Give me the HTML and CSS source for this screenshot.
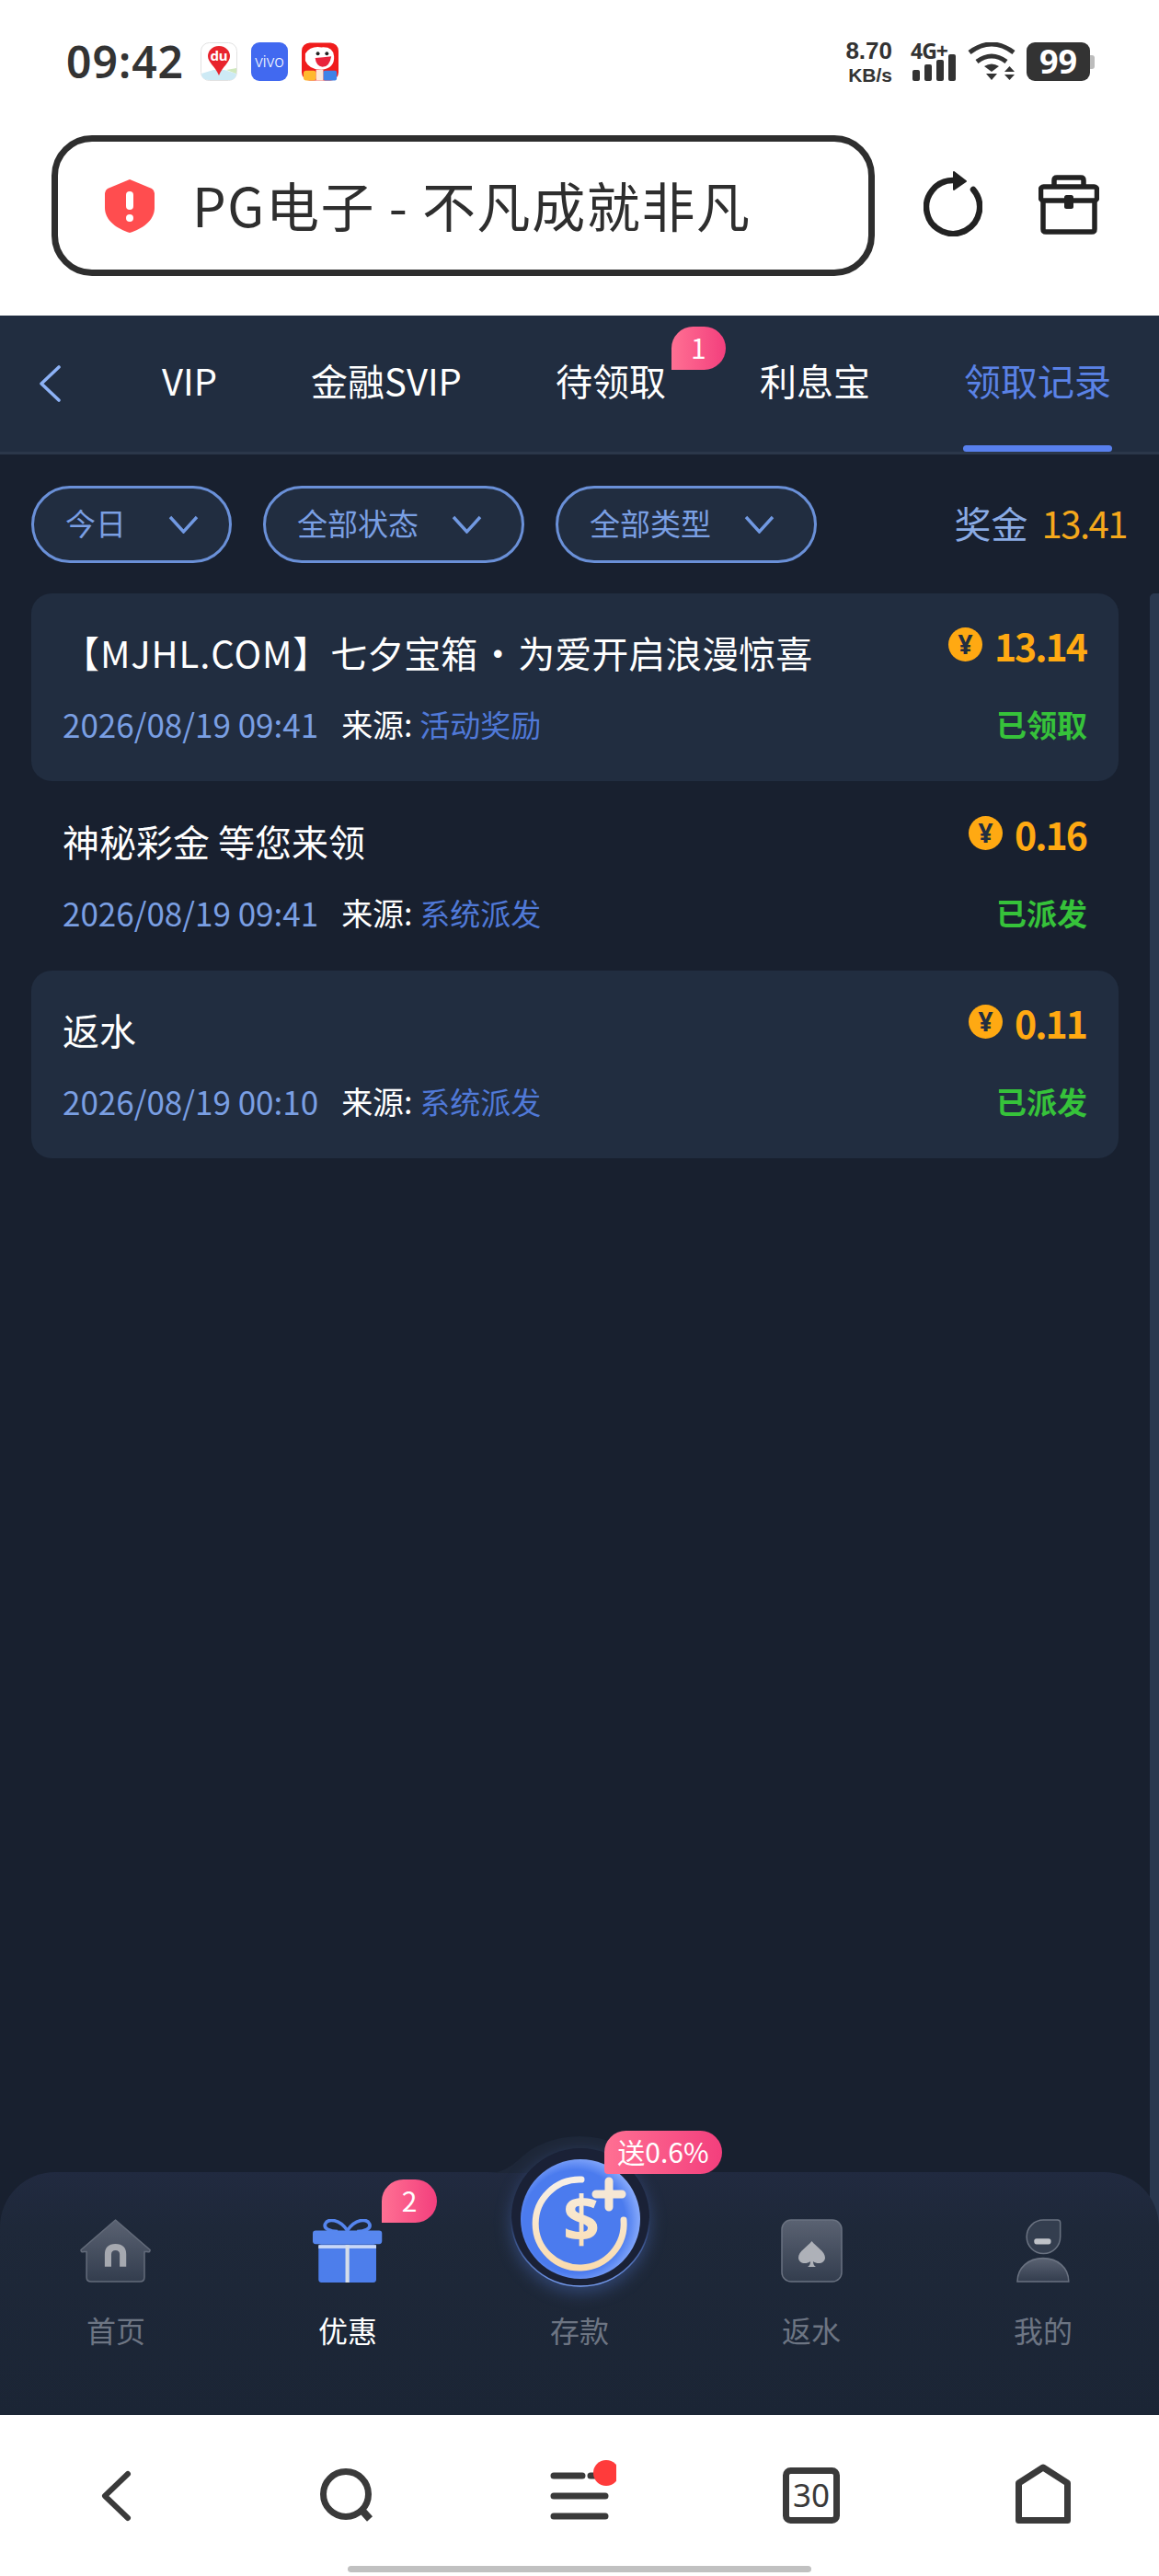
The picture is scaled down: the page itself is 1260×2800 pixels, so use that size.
FILE: index.html
```html
<!DOCTYPE html>
<html lang="zh-CN">
<head>
    <meta charset="UTF-8">
    <meta name="viewport" content="width=device-width, initial-scale=1.0">
    <title>领取记录</title>
    <link rel="stylesheet" href="styles.css">
</head>
<body>
    <div class="phone">
        <!-- 状态栏 -->
        <div class="statusbar">
            <span class="clock">09:42</span>
            <div class="app-icons">
                <svg class="app-icon" viewBox="0 0 40 42">
                    <rect x="0.5" y="0.5" width="39" height="41" rx="9" fill="#fff" stroke="#e2e2e2"/>
                    <path d="M1 34 L14 30 L26 30 L39 34 V33 Q39 41 31 41 H9 Q1 41 1 33 Z" fill="#cdeaf5"/>
                    <path d="M28 30 L39 34 V28 Z" fill="#cfe8bd"/>
                    <path d="M20 4 C28 4 32 10 32 15 C32 22 24 26 20 36 C16 26 8 22 8 15 C8 10 12 4 20 4 Z" fill="#e8242c"/>
                    <text x="20" y="20" class="du-text" text-anchor="middle">du</text>
                </svg>
                <svg class="app-icon" viewBox="0 0 40 42">
                    <rect width="40" height="42" rx="9" fill="#4169f0"/>
                    <text x="20" y="27" class="vivo-text" text-anchor="middle">vivo</text>
                </svg>
                <svg class="app-icon" viewBox="0 0 41 42">
                    <rect width="41" height="42" rx="9" fill="#f01c1c"/>
                    <path d="M4 12 Q10 3 22 5 Q35 4 36 15 Q37 28 22 30 Q8 30 4 20 Z" fill="#fff"/>
                    <circle cx="18" cy="12" r="2" fill="#222"/>
                    <circle cx="28" cy="12" r="2" fill="#222"/>
                    <path d="M15 17 Q24 16 33 15 Q31 27 23 27 Q16 26 15 17 Z" fill="#e8243c"/>
                    <rect x="2" y="31" width="14" height="11" rx="3" fill="#ffb92e"/>
                    <rect x="24" y="31" width="15" height="11" rx="2" fill="#3f83e8"/>
                    <path d="M16 30 H24 V42 H16 Z" fill="#fde7d8"/>
                </svg>
            </div>
            <div class="status-right">
                <div class="net-speed">
                    <span class="speed-num">8.70</span>
                    <span class="speed-unit">KB/s</span>
                </div>
                <div class="signal">
                    <span class="signal-label">4G+</span>
                    <div class="signal-bars">
                        <i class="bar bar-1"></i>
                        <i class="bar bar-2"></i>
                        <i class="bar bar-3"></i>
                        <i class="bar bar-4"></i>
                    </div>
                </div>
                <svg class="wifi" viewBox="0 0 53 42">
                    <path d="M2 11 Q26 -7 50 11" fill="none" stroke="#333" stroke-width="5"/>
                    <path d="M10 21 Q26 9 42 21" fill="none" stroke="#333" stroke-width="5"/>
                    <path d="M18 26 Q26 21 34 26 L26 32 Z" fill="#333"/>
                    <path d="M20 34 H32 L26 41 Z" fill="#333"/>
                    <path d="M45.5 26 L51 32 H40 Z" fill="#333"/>
                    <path d="M40 35 H51 L45.5 41 Z" fill="#333"/>
                </svg>
                <div class="battery">
                    <span class="battery-level">99</span>
                    <i class="battery-nub"></i>
                </div>
            </div>
        </div>

        <!-- 地址栏 -->
        <div class="urlrow">
            <div class="urlbar">
                <svg class="shield" viewBox="0 0 54 58">
                    <path d="M27 0 L51 10 Q54 12 54 15 V31 C54 45 40 54 27 58 C14 54 0 45 0 31 V15 Q0 12 3 10 Z" fill="#ff4d4f"/>
                    <rect x="23" y="13" width="8" height="20" rx="4" fill="#fff"/>
                    <circle cx="27" cy="42" r="4" fill="#fff"/>
                </svg>
                <span class="url-title">PG电子 - 不凡成就非凡</span>
            </div>
            <svg class="reload" viewBox="0 0 64 71">
                <path d="M54 20 A29 29 0 1 1 32 10" fill="none" stroke="#222" stroke-width="6.5" stroke-linecap="round"/>
                <path d="M33 1 L46 11 L33 20 Z" fill="#222" stroke="#222" stroke-width="2" stroke-linejoin="round"/>
            </svg>
            <svg class="toolbox" viewBox="0 0 66 65">
                <path d="M17 12 V6 Q17 3 20 3 H46 Q49 3 49 6 V12" fill="none" stroke="#222" stroke-width="5.5"/>
                <rect x="2.5" y="13" width="61" height="15" rx="3" fill="none" stroke="#222" stroke-width="5.5"/>
                <path d="M5 28 V59 Q5 62 8 62 H58 Q61 62 61 59 V28" fill="none" stroke="#222" stroke-width="5.5"/>
                <rect x="28" y="22" width="10" height="15" rx="2.5" fill="#222"/>
            </svg>
        </div>

        <!-- 页面内容 -->
        <div class="page">
            <div class="topnav">
                <svg class="nav-back" viewBox="0 0 24 40">
                    <path d="M22 2 L3 20 L22 38" fill="none" stroke="#8db2f6" stroke-width="3.6" stroke-linecap="round" stroke-linejoin="round"/>
                </svg>
                <div class="nav-tabs">
                    <div class="nav-tab">VIP</div>
                    <div class="nav-tab">金融SVIP</div>
                    <div class="nav-tab">待领取<span class="badge nav-badge">1</span></div>
                    <div class="nav-tab">利息宝</div>
                    <div class="nav-tab active">领取记录</div>
                </div>
            </div>

            <div class="filters">
                <div class="pill pill-today">
                    <span class="pill-text">今日</span>
                    <svg class="chevron" viewBox="0 0 33 20"><path d="M2 2 L16.5 18 L31 2" fill="none" stroke="#7199e2" stroke-width="3.4"/></svg>
                </div>
                <div class="pill">
                    <span class="pill-text">全部状态</span>
                    <svg class="chevron" viewBox="0 0 33 20"><path d="M2 2 L16.5 18 L31 2" fill="none" stroke="#7199e2" stroke-width="3.4"/></svg>
                </div>
                <div class="pill">
                    <span class="pill-text">全部类型</span>
                    <svg class="chevron" viewBox="0 0 33 20"><path d="M2 2 L16.5 18 L31 2" fill="none" stroke="#7199e2" stroke-width="3.4"/></svg>
                </div>
                <div class="bonus">
                    <span class="bonus-label">奖金</span>
                    <span class="bonus-value">13.41</span>
                </div>
            </div>

            <div class="records">
                <div class="record striped">
                    <div class="record-top">
                        <span class="record-title"><span class="title-latin">【MJHL.COM】</span>七夕宝箱<span class="title-dot">·</span>为爱开启浪漫惊喜</span>
                        <span class="record-amount"><i class="coin">¥</i>13.14</span>
                    </div>
                    <div class="record-bottom">
                        <span class="record-date">2026/08/19 09:41</span>
                        <span class="record-source">来源: <em>活动奖励</em></span>
                        <span class="record-status">已领取</span>
                    </div>
                </div>
                <div class="record">
                    <div class="record-top">
                        <span class="record-title">神秘彩金 等您来领</span>
                        <span class="record-amount"><i class="coin">¥</i>0.16</span>
                    </div>
                    <div class="record-bottom">
                        <span class="record-date">2026/08/19 09:41</span>
                        <span class="record-source">来源: <em>系统派发</em></span>
                        <span class="record-status">已派发</span>
                    </div>
                </div>
                <div class="record striped">
                    <div class="record-top">
                        <span class="record-title">返水</span>
                        <span class="record-amount"><i class="coin">¥</i>0.11</span>
                    </div>
                    <div class="record-bottom">
                        <span class="record-date">2026/08/19 00:10</span>
                        <span class="record-source">来源: <em>系统派发</em></span>
                        <span class="record-status">已派发</span>
                    </div>
                </div>
            </div>

            <div class="scroll-thumb"></div>

            <!-- 底部导航 -->
            <div class="tabbar">
                <svg class="tabbar-hump" viewBox="0 0 200 40">
                    <path d="M0 40 C25 40 32 24 50 13 C68 3 85 0 100 0 C115 0 132 3 150 13 C168 24 175 40 200 40 Z" fill="#1e2738"/>
                </svg>
                <div class="tab">
                    <svg class="tab-icon" viewBox="0 0 76 68">
                        <defs>
                            <linearGradient id="grayFill" x1="0" y1="0" x2="0" y2="1">
                                <stop offset="0" stop-color="#5a6272"/>
                                <stop offset="1" stop-color="#333d4e"/>
                            </linearGradient>
                        </defs>
                        <path d="M38 1 L75 33 Q75 36 72 35 H69 V62 Q69 67 64 67 H12 Q7 67 7 62 V35 H4 Q1 36 1 33 Z" fill="url(#grayFill)" stroke="#636b7a" stroke-width="1.5" stroke-linejoin="round"/>
                        <path d="M30 51 V38 Q30 30 38 30 Q46 30 46 38 V51" fill="none" stroke="#a6a9b0" stroke-width="7"/>
                    </svg>
                    <span class="tab-label">首页</span>
                </div>
                <div class="tab current">
                    <svg class="tab-icon" viewBox="0 0 72 66">
                        <path d="M36 12 C28 0 16 -1 13 5 C11 10 18 13 26 13 M36 12 C44 0 56 -1 59 5 C61 10 54 13 46 13" fill="none" stroke="#5585ee" stroke-width="3.5"/>
                        <rect x="0" y="12" width="72" height="14" rx="3" fill="#5787ef"/>
                        <rect x="6" y="26" width="60" height="40" rx="3" fill="#4d7eeb"/>
                        <rect x="6" y="27" width="60" height="3.5" fill="#c9d8f6"/>
                        <rect x="34" y="27" width="4" height="39" fill="#d5dde9"/>
                    </svg>
                    <span class="tab-label">优惠</span>
                    <span class="badge tab-badge">2</span>
                </div>
                <div class="tab">
                    <div class="tab-icon"></div>
                    <span class="tab-label">存款</span>
                </div>
                <div class="tab">
                    <svg class="tab-icon" viewBox="0 0 67 69">
                        <rect x="1" y="1" width="65" height="67" rx="10" fill="url(#grayFill)" stroke="#6a7281" stroke-width="1.5"/>
                        <path d="M33.5 24 C38 30 48 35 48 42 C48 48 40 50 35 46 C35 49 36 51 38 52 H29 C31 51 32 49 32 46 C27 50 19 48 19 42 C19 35 29 30 33.5 24 Z" fill="#aeb1b8"/>
                    </svg>
                    <span class="tab-label">返水</span>
                </div>
                <div class="tab">
                    <svg class="tab-icon" viewBox="0 0 57 68">
                        <path d="M29 1 H44 Q47 1 47 4 V19 C47 29 39 37 29 37 C19 37 11 29 11 19 C11 9 19 1 29 1 Z" fill="#343e4f" stroke="#6a7281" stroke-width="1.5"/>
                        <rect x="19" y="21" width="18" height="6" rx="2.5" fill="#c0c3c9"/>
                        <path d="M1 67 C1 52 13 42 28.5 42 C44 42 56 52 56 67 Z" fill="url(#grayFill)" stroke="#6a7281" stroke-width="1.5"/>
                    </svg>
                    <span class="tab-label">我的</span>
                </div>
                <svg class="deposit" viewBox="0 0 170 170">
                    <defs>
                        <radialGradient id="coinBlue" cx="0.45" cy="0.52" r="0.55">
                            <stop offset="0.78" stop-color="#4b7bee"/>
                            <stop offset="1" stop-color="#86a9fb"/>
                        </radialGradient>
                        <linearGradient id="cream" x1="0" y1="0" x2="0" y2="1">
                            <stop offset="0" stop-color="#f7efe6"/>
                            <stop offset="1" stop-color="#fbdcae"/>
                        </linearGradient>
                        <linearGradient id="ringLine" x1="0" y1="0" x2="0" y2="1">
                            <stop offset="0.5" stop-color="#4f7ee8" stop-opacity="0"/>
                            <stop offset="1" stop-color="#7aa1f6"/>
                        </linearGradient>
                    </defs>
                    <circle cx="85" cy="81" r="75" fill="#1a2136" stroke="url(#ringLine)" stroke-width="1.6"/>
                    <circle cx="85" cy="83" r="65" fill="url(#coinBlue)"/>
                    <path d="M86 40 A48 48 0 1 0 132 84" fill="none" stroke="url(#cream)" stroke-width="7" stroke-linecap="round"/>
                    <path d="M116 42 V70 M102 56 H130" fill="none" stroke="#f6e7d4" stroke-width="9" stroke-linecap="round"/>
                    <text x="86" y="108" class="dollar" text-anchor="middle" fill="url(#cream)">$</text>
                </svg>
                <span class="badge deposit-badge">送0.6%</span>
            </div>
        </div>

        <!-- 浏览器底栏 -->
        <div class="browserbar">
            <svg class="browser-icon" viewBox="0 0 80 80">
                <path d="M53 16 L28 40 L53 64" fill="none" stroke="#3a3a3a" stroke-width="6" stroke-linecap="round" stroke-linejoin="round"/>
            </svg>
            <svg class="browser-icon" viewBox="0 0 80 80">
                <circle cx="38" cy="38" r="24.5" fill="none" stroke="#3a3a3a" stroke-width="7"/>
                <path d="M55 55 L64 65" fill="none" stroke="#3a3a3a" stroke-width="8"/>
            </svg>
            <svg class="browser-icon" viewBox="0 0 80 80">
                <path d="M12 18 H43 M52 18 H60 M12 40 H68 M12 62 H68" fill="none" stroke="#3a3a3a" stroke-width="7" stroke-linecap="round"/>
                <circle cx="69" cy="15" r="14" fill="#ff3b3b"/>
            </svg>
            <svg class="browser-icon" viewBox="0 0 80 80">
                <rect x="12.5" y="12.5" width="55" height="54" rx="5" fill="none" stroke="#3a3a3a" stroke-width="7"/>
                <text x="40" y="52" class="tabs-count" text-anchor="middle">30</text>
            </svg>
            <svg class="browser-icon" viewBox="0 0 80 80">
                <path d="M40 9 L66.5 26 V66.5 H13.5 V26 Z" fill="none" stroke="#3a3a3a" stroke-width="7" stroke-linejoin="round"/>
            </svg>
            <div class="home-pill"></div>
        </div>
    </div>
</body>
</html>
```

FILE: styles.css
```css
:root {
    --card-bg: #212d40;
    --page-bg: #18202f;
    --blue-text: #7a9fe3;
    --blue-strong: #5a82e6;
    --gold: #ffa912;
    --ink: #2e2e2e;
}

* {
    box-sizing: border-box;
}

body {
    margin: 0;
    font-family: "Noto Sans CJK SC", "Noto Sans", sans-serif;
    background: #fff;
}

.phone {
    width: 1260px;
    height: 2800px;
    display: flex;
    flex-direction: column;
    overflow: hidden;
}

/* 状态栏 */
.statusbar {
    height: 147px;
    padding: 46px 75px 0 72px;
    display: flex;
    align-items: flex-start;
}

.clock {
    font-family: "Noto Sans", sans-serif;
    font-size: 48px;
    font-weight: 600;
    letter-spacing: 1px;
    line-height: 42px;
    color: #333;
}

.app-icons {
    display: flex;
    gap: 15px;
    margin-left: 18px;
}

.app-icon {
    width: 40px;
    height: 42px;
}

.du-text {
    font: 700 15px "Noto Sans", sans-serif;
    fill: #fff;
}

.vivo-text {
    font: 300 18px "Noto Sans", sans-serif;
    fill: #fff;
}

.status-right {
    margin-left: auto;
    display: flex;
    align-items: flex-start;
}

.net-speed {
    width: 54px;
    margin-top: -6px;
    display: flex;
    flex-direction: column;
    align-items: flex-end;
    font-family: "Liberation Sans", sans-serif;
    font-weight: 700;
    color: #333;
}

.speed-num {
    font-size: 26px;
    line-height: 30px;
}

.speed-unit {
    font-size: 21px;
    line-height: 24px;
}

.signal {
    width: 50px;
    height: 42px;
    margin-left: 20px;
    position: relative;
}

.signal-label {
    display: block;
    font: 700 23px/18px "Noto Sans", sans-serif;
    letter-spacing: -1px;
    color: #333;
}

.signal-bars {
    position: absolute;
    left: 2px;
    bottom: 0;
    display: flex;
    align-items: flex-end;
    gap: 5.5px;
}

.bar {
    display: block;
    width: 7.5px;
    background: #333;
    border-radius: 2px;
}

.bar-1 { height: 12px; }
.bar-2 { height: 18px; }
.bar-3 { height: 23px; }
.bar-4 { height: 29px; }

.wifi {
    width: 53px;
    height: 42px;
    margin-left: 12px;
}

.battery {
    width: 69px;
    height: 42px;
    margin-left: 11px;
    border-radius: 9px;
    background: #333;
    position: relative;
    text-align: center;
}

.battery-level {
    font: 700 36px/42px "Noto Sans", sans-serif;
    color: #fff;
}

.battery-nub {
    position: absolute;
    left: 69px;
    top: 14px;
    width: 5px;
    height: 15px;
    background: #bcbcbc;
    border-radius: 0 3px 3px 0;
}

/* 地址栏 */
.urlrow {
    height: 196px;
    padding-left: 56px;
    display: flex;
    align-items: flex-start;
}

.urlbar {
    width: 895px;
    height: 153px;
    padding: 0 0 0 51px;
    border: 7px solid var(--ink);
    border-radius: 44px;
    display: flex;
    align-items: center;
}

.shield {
    width: 54px;
    height: 58px;
}

.url-title {
    margin: 0 0 3px 41px;
    font-size: 58px;
    letter-spacing: 1.6px;
    color: var(--ink);
}

.reload {
    width: 64px;
    height: 71px;
    margin: 39px 0 0 53px;
}

.toolbox {
    width: 66px;
    height: 65px;
    margin: 43px 0 0 61px;
}

/* 页面内容 */
.page {
    flex: 1;
    background: var(--page-bg);
    display: flex;
    flex-direction: column;
    position: relative;
}

.topnav {
    height: 151px;
    padding-left: 42px;
    background: var(--card-bg);
    border-bottom: 3px solid #2b374a;
    display: flex;
    align-items: flex-start;
}

.nav-back {
    width: 24px;
    height: 40px;
    margin-top: 54px;
}

.nav-tabs {
    display: flex;
    gap: 102px;
    margin-left: 110px;
}

.nav-tab {
    height: 148px;
    padding-top: 42px;
    font-size: 40px;
    line-height: 56px;
    color: #fff;
    position: relative;
}

.nav-tab.active {
    color: var(--blue-strong);
}

.nav-tab.active::after {
    content: "";
    position: absolute;
    left: -1px;
    right: -1px;
    bottom: 0;
    height: 7px;
    border-radius: 4px;
    background: #5880ee;
}

.badge {
    position: absolute;
    height: 47px;
    padding: 0 16px;
    border-radius: 24px 24px 24px 0;
    background: linear-gradient(90deg, #ff7093, #f33f7d);
    color: #fff;
    font-size: 30px;
    line-height: 45px;
    white-space: nowrap;
}

.nav-badge {
    left: 126px;
    top: 12px;
    width: 59px;
    padding: 0;
    text-align: center;
}

.filters {
    padding: 34px 35px 0 34px;
    display: flex;
    align-items: center;
    gap: 34px;
}

.pill {
    width: 284px;
    height: 84px;
    padding: 0 43px 0 34px;
    border: 3px solid #6a90d8;
    border-radius: 42px;
    background: var(--card-bg);
    color: var(--blue-text);
    font-size: 33px;
    display: flex;
    align-items: center;
    justify-content: space-between;
}

.pill-today {
    width: 218px;
    padding-right: 33px;
}

.pill-text {
    margin-top: -5px;
}

.chevron {
    width: 33px;
    height: 20px;
}

.bonus {
    margin: -5px 0 0 auto;
    display: flex;
    align-items: center;
    gap: 15px;
}

.bonus-label {
    font-size: 40px;
    color: #8aabe4;
}

.bonus-value {
    font-size: 40px;
    letter-spacing: -1.5px;
    color: #f5a81c;
}

.records {
    margin: 33px 44px 0 34px;
    display: flex;
    flex-direction: column;
    gap: 1px;
}

.record {
    height: 204px;
    padding: 34px 34px 0;
    border-radius: 22px;
}

.record.striped {
    background: var(--card-bg);
}

.record-top {
    height: 86px;
    display: flex;
    justify-content: space-between;
    align-items: flex-start;
}

.record-title {
    margin-top: 8px;
    font-size: 40px;
    line-height: 44px;
    color: #fff;
}

.title-latin {
    letter-spacing: 0.9px;
}

.title-dot {
    margin: 0 2px;
}

.record-amount {
    height: 43px;
    margin-right: 1px;
    display: flex;
    align-items: center;
    font-size: 41px;
    font-weight: 700;
    letter-spacing: -2px;
    color: var(--gold);
}

.coin {
    width: 37px;
    height: 37px;
    margin-right: 13px;
    border-radius: 50%;
    background: var(--gold);
    color: var(--card-bg);
    font-family: "Noto Sans", sans-serif;
    font-size: 28px;
    font-style: normal;
    font-weight: 700;
    letter-spacing: 0;
    line-height: 37px;
    text-align: center;
}

.record-bottom {
    display: flex;
    align-items: center;
    font-size: 34px;
    line-height: 44px;
}

.record-date {
    font-size: 35px;
    color: var(--blue-text);
}

.record-source {
    margin-left: 25px;
    color: #fff;
}

.record-source em {
    font-size: 33px;
    font-style: normal;
    color: #5079d8;
}

.record-status {
    margin-left: auto;
    font-size: 33px;
    font-weight: 700;
    color: #36c23a;
}

.scroll-thumb {
    position: absolute;
    top: 302px;
    right: 0;
    bottom: 0;
    width: 10px;
    border-radius: 5px 0 0 0;
    background: #2a384f;
}

/* 底部导航 */
.tabbar {
    height: 264px;
    margin-top: auto;
    padding-top: 50px;
    border-radius: 60px 60px 0 0;
    background: linear-gradient(180deg, #212a40 0, #1e2839 60px, #1b2535 100%);
    display: grid;
    grid-template-columns: repeat(5, 1fr);
    position: relative;
}

.tabbar-hump {
    position: absolute;
    left: 530px;
    top: -39px;
    width: 200px;
    height: 40px;
}

.tab {
    display: flex;
    flex-direction: column;
    align-items: center;
    position: relative;
}

.tab-icon {
    height: 70px;
    padding-top: 1px;
}

.tab-label {
    margin-top: 29px;
    font-size: 32px;
    line-height: 44px;
    color: #6d7583;
}

.tab.current .tab-label {
    color: #fff;
}

.tab-badge {
    left: 163px;
    top: -42px;
    width: 60px;
    padding: 0;
    text-align: center;
}

.deposit {
    position: absolute;
    left: 546px;
    top: -32px;
    width: 170px;
    height: 170px;
    filter: drop-shadow(0 6px 9px rgba(90, 130, 230, 0.35));
}

.dollar {
    font: 700 70px "Noto Sans", sans-serif;
}

.deposit-badge {
    left: 657px;
    top: -45px;
    width: 128px;
    padding: 0;
    text-align: center;
    border-bottom-left-radius: 4px;
}

/* 浏览器底栏 */
.browserbar {
    height: 175px;
    padding-top: 48px;
    background: #fff;
    display: grid;
    grid-template-columns: repeat(5, 1fr);
    justify-items: center;
    align-items: start;
    position: relative;
}

.browser-icon {
    width: 80px;
    height: 80px;
}

.tabs-count {
    font: 400 35px "Noto Sans", sans-serif;
    fill: #3a3a3a;
}

.home-pill {
    position: absolute;
    left: 378px;
    bottom: 4px;
    width: 504px;
    height: 7px;
    border-radius: 4px;
    background: #c1c1c1;
}
```
